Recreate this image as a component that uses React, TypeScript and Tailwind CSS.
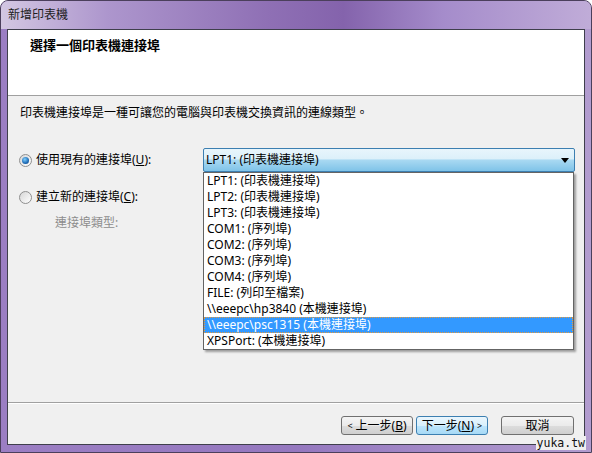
const items = [
  "LPT1: (印表機連接埠)",
  "LPT2: (印表機連接埠)",
  "LPT3: (印表機連接埠)",
  "COM1: (序列埠)",
  "COM2: (序列埠)",
  "COM3: (序列埠)",
  "COM4: (序列埠)",
  "FILE: (列印至檔案)",
  "\\\\eeepc\\hp3840 (本機連接埠)",
  "\\\\eeepc\\psc1315 (本機連接埠)",
  "XPSPort: (本機連接埠)",
];

const Radio = ({ checked }: { checked?: boolean }) => (
  <div className="w-[13px] h-[13px] rounded-full border border-[#8f8f8f] bg-[linear-gradient(135deg,#d6d6d6,#ffffff)] flex items-center justify-center shrink-0">
    {checked && (
      <div className="w-[7px] h-[7px] rounded-full bg-[radial-gradient(circle_at_40%_35%,#7fd0ff,#1f6bb5_60%,#0d3f78)]" />
    )}
  </div>
);

export default function App() {
  return (
    <div
      className="relative w-[592px] h-[453px] rounded-t-[8px] border border-[#4b3f5c] bg-[linear-gradient(to_right,#9b7ec3,#9578bf_50%,#b29ccf)] flex flex-col text-[12px] text-black"
      style={{ fontFamily: '"Noto Sans", "Noto Sans CJK TC", sans-serif' }}
    >
      {/* title bar */}
      <div className="h-[28px] flex items-center pl-[7px] rounded-t-[7px] bg-[linear-gradient(to_right,#d3c7e2,#ad96cd_18%,#8f70b5_45%,#8463ac_58%,#a58ccb_75%,#c0acd8)] text-[#1d1d1d]">
        新增印表機
      </div>

      {/* client */}
      <div className="mx-[6px] h-[416px] border border-[#3f3f4c] bg-[#f0f0f0] flex flex-col">
        <div className="h-[66px] shrink-0 bg-white border-b border-[#a0a0a0] pl-[22px] pt-[6px]">
          <div className="text-[13px] font-bold leading-[18px]">選擇一個印表機連接埠</div>
        </div>

        <div className="flex-1 flex flex-col pl-[11px] pt-[9px]">
          <div className="pl-[1px] leading-[16px]">印表機連接埠是一種可讓您的電腦與印表機交換資訊的連線類型。</div>

          <div className="flex items-center mt-[27px] h-[24px]">
            <Radio checked />
            <div className="w-[171px] pl-[4px] leading-[16px]">
              使用現有的連接埠(<span className="underline">U</span>):
            </div>
            <div className="relative w-[372px] h-[24px]">
              <div className="h-full rounded-[2px] border border-[#3c7fb1] bg-[linear-gradient(to_bottom,#e8f5fc,#dcf0fa_45%,#a9d9f2_50%,#7fc3e8)] flex items-center pl-[2px] pr-[5px]">
                <span className="flex-1 leading-[16px]">LPT1: (印表機連接埠)</span>
                <svg width="8" height="5" viewBox="0 0 8 5"><path d="M0 0h8L4 5z" fill="#000" /></svg>
              </div>
              <div className="absolute left-0 top-full w-[371px] border border-[#646464] bg-white shadow-[2px_2px_2px_rgba(0,0,0,0.35)] z-10">
                {items.map((t, i) => (
                  <div
                    key={t}
                    className={
                      i === 9
                        ? "h-[16px] leading-[14px] pl-[2px] bg-[#3399ff] text-white border border-dotted border-[#e69a3c] whitespace-nowrap"
                        : "h-[16px] leading-[16px] pl-[3px] whitespace-nowrap"
                    }
                  >
                    {t}
                  </div>
                ))}
              </div>
            </div>
          </div>

          <div className="flex items-center mt-[17px] h-[16px]">
            <Radio />
            <div className="pl-[4px] leading-[16px]">
              建立新的連接埠(<span className="underline">C</span>):
            </div>
          </div>

          <div className="mt-[10px] pl-[36px] leading-[16px] text-[#8d8d8d]">連接埠類型:</div>
        </div>

        <div className="h-[42px] shrink-0 border-t border-[#a0a0a0] flex flex-col">
          <div className="h-[1px] bg-white" />
          <div className="flex justify-end pr-[10px] pt-[12px]">
            <div className="w-[72px] h-[19px] rounded-[3px] border border-[#707070] bg-[linear-gradient(to_bottom,#f4f4f4,#ebebeb_50%,#dddddd_51%,#cfcfcf)] flex items-center justify-center leading-[16px]">
              <span className="text-[9px] mr-[3px]">&lt;</span>上一步(<span className="underline">B</span>)
            </div>
            <div className="ml-[3px] w-[72px] h-[19px] rounded-[3px] border border-[#3c7fb1] bg-[linear-gradient(to_bottom,#eaf6fd,#d9f0fc_50%,#bee6fd_51%,#a7d9f5)] flex items-center justify-center leading-[16px]">
              下一步(<span className="underline">N</span>)<span className="text-[9px] ml-[3px]">&gt;</span>
            </div>
            <div className="ml-[13px] w-[73px] h-[19px] rounded-[3px] border border-[#707070] bg-[linear-gradient(to_bottom,#f4f4f4,#ebebeb_50%,#dddddd_51%,#cfcfcf)] flex items-center justify-center leading-[16px]">
              取消
            </div>
          </div>
        </div>
      </div>

      <div
        className="absolute right-[5px] bottom-[2px] bg-[#f0f0f0] px-[1px] text-[11.5px] leading-[14px] text-[#111]"
        style={{ fontFamily: '"DejaVu Sans Mono", monospace' }}
      >
        yuka.tw
      </div>
    </div>
  );
}
